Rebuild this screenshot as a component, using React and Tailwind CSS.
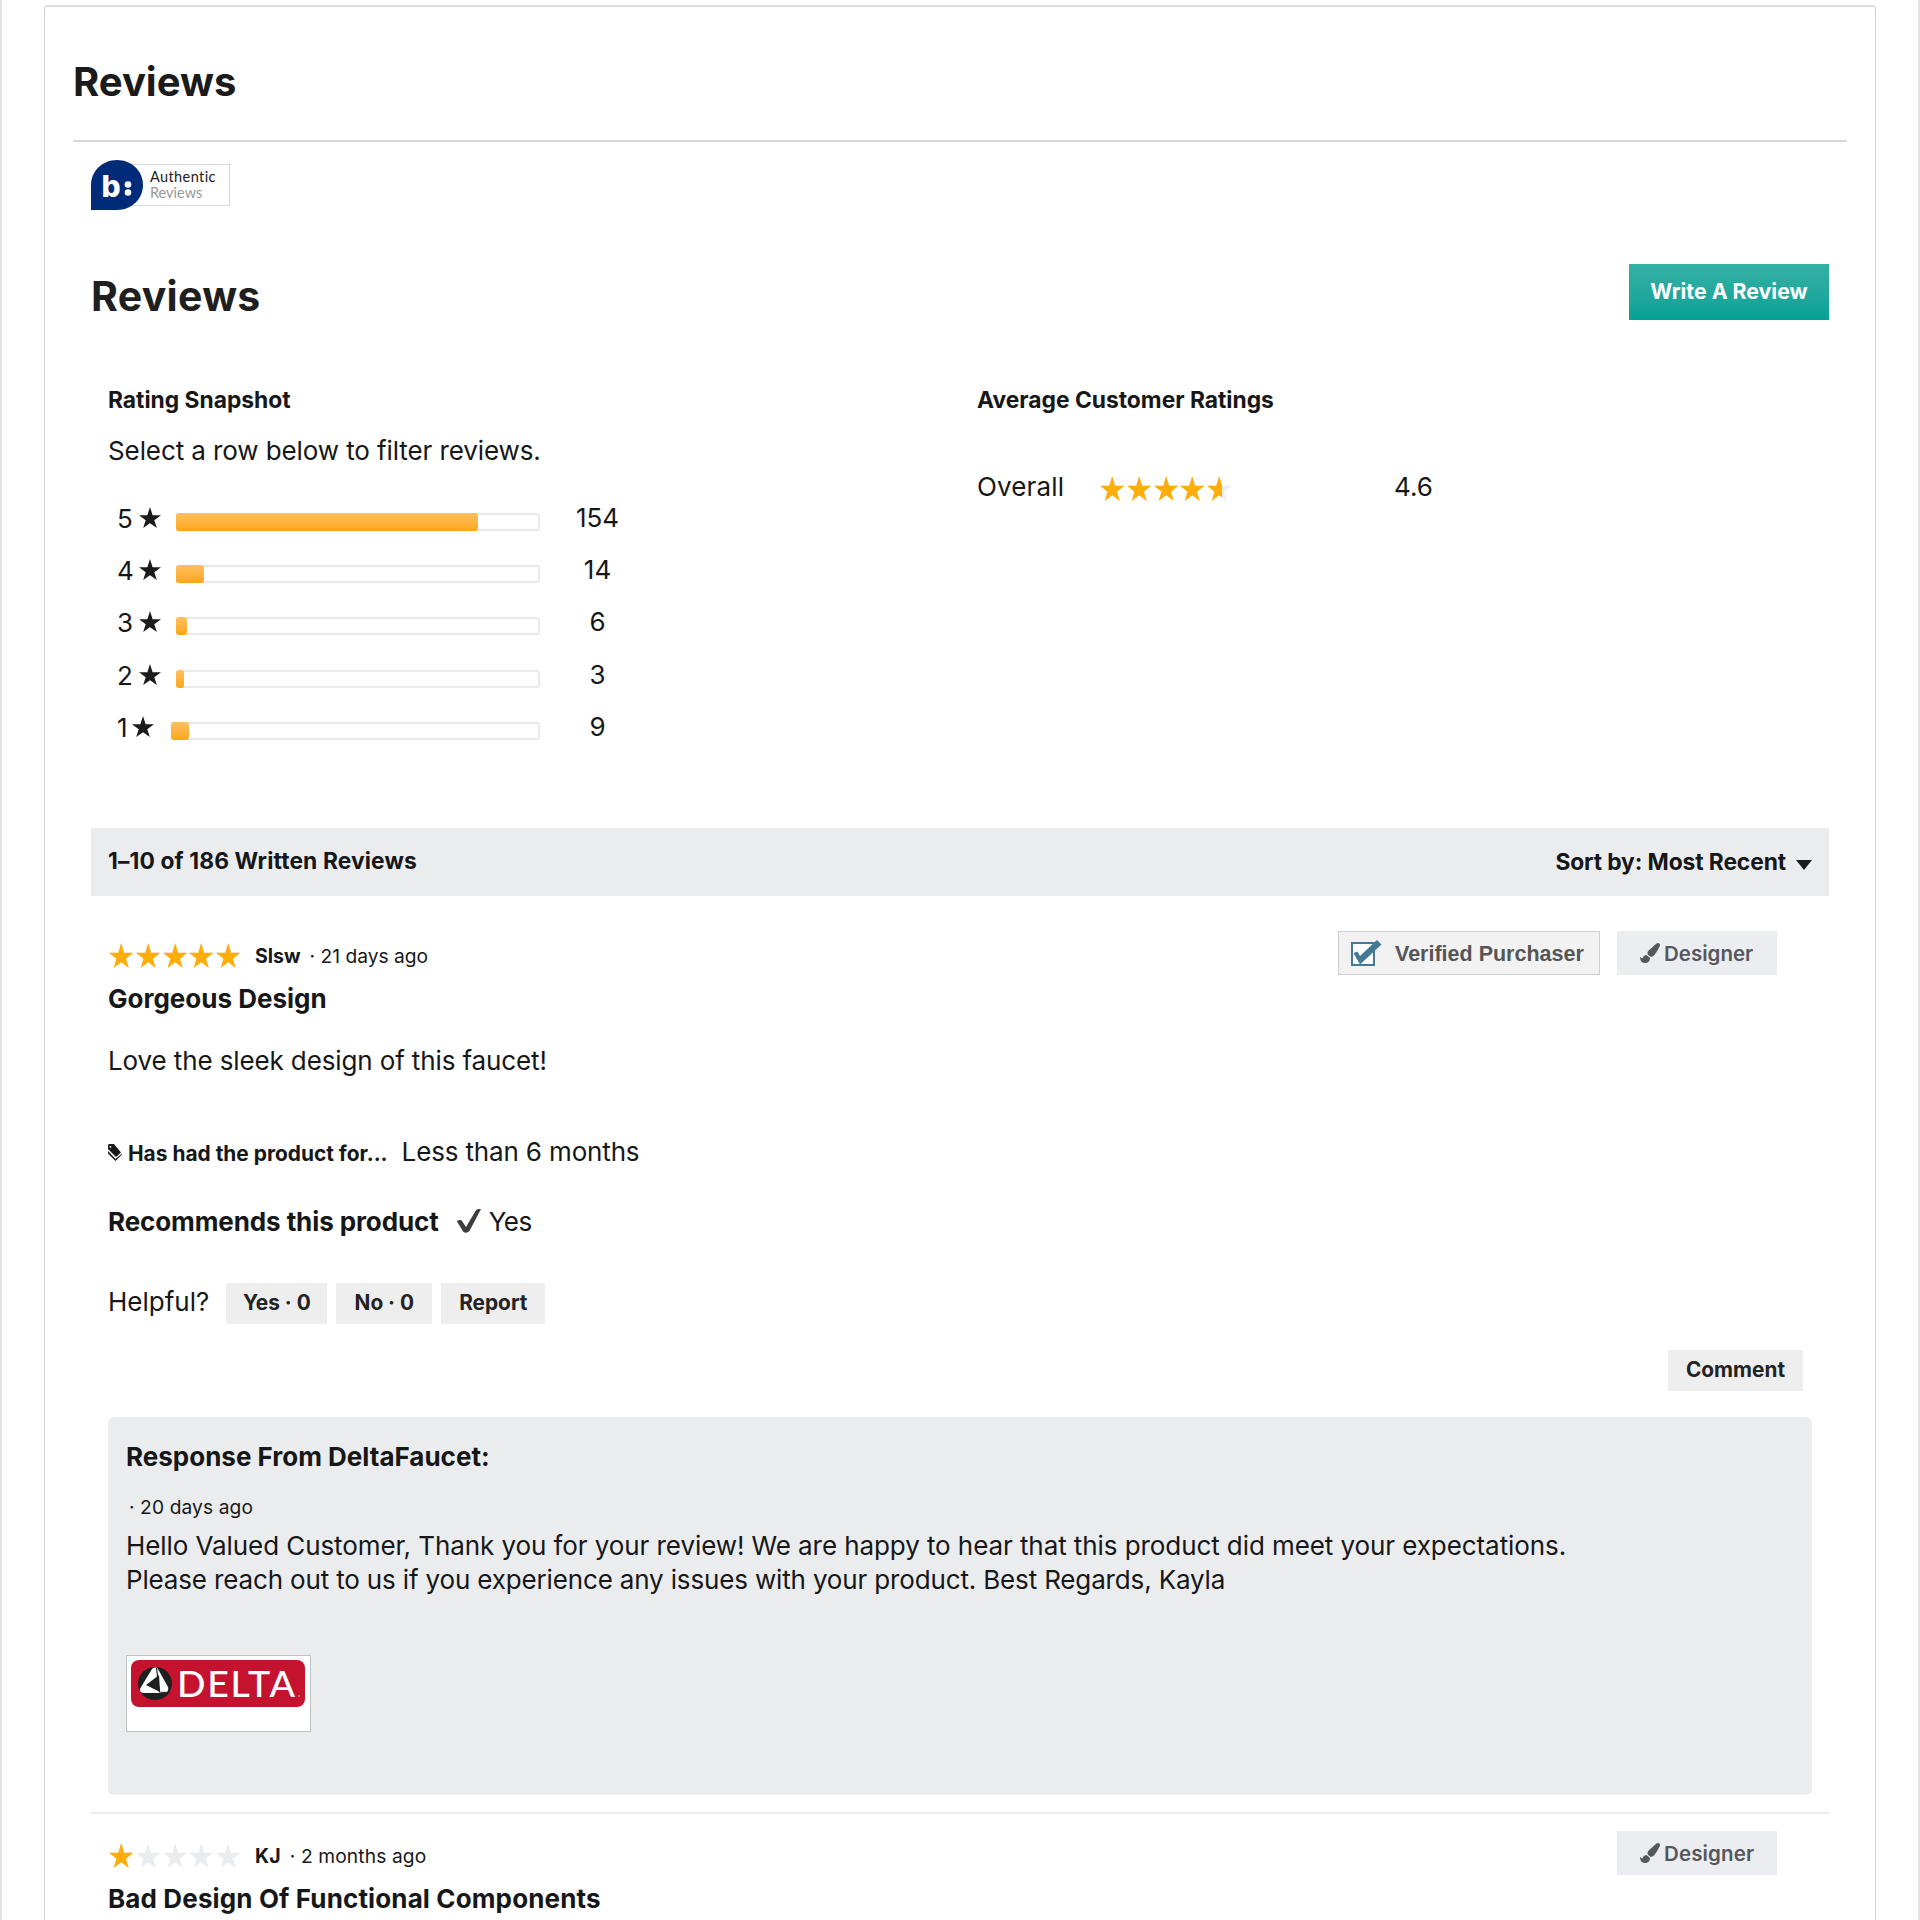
import React from 'react';
import clsx from 'clsx';
import { FaPaintBrush } from 'react-icons/fa';

const SNAPSHOT = [
  { stars: 5, count: 154, fill: 302 },
  { stars: 4, count: 14, fill: 28 },
  { stars: 3, count: 6, fill: 10.5 },
  { stars: 2, count: 3, fill: 7.5 },
  { stars: 1, count: 9, fill: 18 },
];

const STAR_POINTS = '50,0 62,38 100,38 69.5,61 81,97 50,75 19,97 30.5,61 0,38 38,38';

function Star({ className }) {
  return (
    <svg viewBox="0 0 100 97" preserveAspectRatio="none" className={clsx('shrink-0', className)}>
      <polygon points={STAR_POINTS} fill="currentColor" />
    </svg>
  );
}

function StarRow({ className }) {
  return (
    <div className={clsx('flex w-[134px] gap-[2.4px]', className)}>
      {[1, 2, 3, 4, 5].map((n) => (
        <Star key={n} className="h-[25px] w-[24.4px]" />
      ))}
    </div>
  );
}

// Grey stars with an orange copy clipped to the rating
function Rating({ width }) {
  return (
    <div className="relative ml-px h-[25px] w-[134px] shrink-0">
      <StarRow className="text-[#eaecee]" />
      <div className="absolute top-0 left-0 overflow-hidden text-[#ffad08]" style={{ width }}>
        <StarRow />
      </div>
    </div>
  );
}

function AuthenticBadge() {
  return (
    <div className="mt-[18px] flex h-[50px] w-[139px] items-center">
      <svg viewBox="0 0 52 50" className="z-10 h-[50px] w-[52px] shrink-0">
        <path d="M0 50V25C0 11 11.5 0 26 0s26 11 26 25-11.500 25-26 25z" fill="#002b78" />
        <text x="10.500" y="37" fill="#fff" fontFamily="Inter, sans-serif" fontWeight="800" fontSize="30">b</text>
        <circle cx="37" cy="24.500" r="3.300" fill="#fff" />
        <circle cx="37" cy="32.500" r="3.300" fill="#fff" />
      </svg>
      <div className="-ml-5 flex h-[42px] grow flex-col justify-center border border-[#d3d9de] pl-[26px] font-[Lato,sans-serif] text-[14.5px] leading-4">
        <span className="tracking-[0.4px] text-[#222]">Authentic</span>
        <span className="text-[#999]">Reviews</span>
      </div>
    </div>
  );
}

function SnapshotRow({ stars, count, fill }) {
  return (
    <div className="flex h-[52.4px] items-center pl-[9px]">
      <span className={clsx('text-[26px]', stars === 1 ? 'w-[15px]' : 'w-[22px]')}>{stars}</span>
      <Star className="mb-[2px] h-[21px] w-[22px] text-[#1b1b1b]" />
      <div className={clsx('mt-[7px] h-[18px] grow rounded-[3px] border-2 border-[#e9e9e9]', stars === 1 ? 'ml-[17px]' : 'ml-[15px]')}>
        <div
          className="-mt-[2px] -ml-[2px] h-[18px] rounded-[3px] bg-linear-to-b from-[#fdc05c] to-[#ffa60a]"
          style={{ width: fill }}
        />
      </div>
      <span className="mb-[2px] w-[115px] text-center text-[26px]">{count}</span>
    </div>
  );
}

function VerifiedBadge() {
  return (
    <div className="flex h-[44px] w-[262px] items-center border border-[#cfcfcf] bg-[#f2f2f2] pl-3">
      <svg viewBox="0 0 31 27" className="h-[27px] w-[31px] shrink-0">
        <rect x="1" y="3" width="22" height="22" fill="#fff" stroke="#427995" strokeWidth="2" />
        <path d="M2.500 13l4-1.500L9 16 26 0l4.500 4.500L9 24.500z" fill="#427995" />
      </svg>
      <span className="ml-[13px] pt-[3px] font-['Liberation_Sans',sans-serif] text-[21.5px] font-bold whitespace-nowrap text-[#565656]">Verified Purchaser</span>
    </div>
  );
}

function DesignerBadge() {
  return (
    <div className="flex h-[44px] w-[160px] items-center bg-[#ebedf0] pl-[23px] text-[#55575b]">
      <FaPaintBrush className="size-5" />
      <span className="ml-[4px] pt-[2px] text-[20.5px] font-semibold">Designer</span>
    </div>
  );
}

function GreyButton({ className, children }) {
  return (
    <button className={clsx('h-[41px] bg-[#eeeeee] pb-[2px] text-[20.8px] font-bold text-[#232323]', className)}>{children}</button>
  );
}

function ReviewHeader({ author, date, width, title, verified }) {
  return (
    <>
      <div className="flex h-[44px] justify-between">
        <div className="flex items-center pt-[5px]">
          <Rating width={width} />
          <span className="ml-3 pt-[2px] text-[19.5px] font-bold">{author}</span>
          <span className="ml-[9px] pt-px text-[19.2px]">· {date}</span>
        </div>
        <div className="mr-[35px] flex gap-[17px]">
          {verified && <VerifiedBadge />}
          <DesignerBadge />
        </div>
      </div>
      <h3 className="mt-[6px] text-[26px] leading-9 font-bold">{title}</h3>
    </>
  );
}

function DeltaLogo() {
  return (
    <div className="mt-[58px] h-[77px] w-[185px] border border-[#bfc2c5] bg-white p-1">
      <svg viewBox="0 0 174 47" className="h-[47px] w-[174px]">
        <rect width="174" height="47" rx="8" fill="#c4122f" />
        <ellipse cx="24" cy="23.500" rx="17" ry="16.500" fill="#1f1f1f" />
        <path d="M21 9c2-2 5-2 6 0l10 18c1 3-1 6-4 6H13c-4 0-5-3-3-6z" fill="#fff" />
        <path d="M28 15l1 17L15 25z" fill="#1f1f1f" />
        <path d="M25.500 8l3 24 10 1" fill="none" stroke="#1f1f1f" strokeWidth="1.200" />
        <text x="46" y="37" fill="#fff" fontFamily="Lato, sans-serif" fontSize="37.500" fontWeight="500" textLength="118">DELTA</text>
        <circle cx="168" cy="36" r="1" fill="#df7c8c" />
      </svg>
    </div>
  );
}

function FirstReview() {
  return (
    <article className="px-[17px] pt-[35px]">
      <ReviewHeader author="Slsw" date="21 days ago" width={134} title="Gorgeous Design" verified />
      <p className="mt-[26px] text-[26px] leading-9 tracking-[-0.12px]">Love the sleek design of this faucet!</p>

      <div className="mt-[55px] flex h-9 items-center leading-9">
        <svg viewBox="0 0 14 17" className="h-[17px] w-[14px]">
          <path d="M1 0h5l7 8.500-5 4.500L0 5V1z" fill="#1b1b1b" />
          <path d="M0 7v2.500L7.500 17 14 10.500V9.500l-6.500 5.500z" fill="#1b1b1b" />
          <circle cx="2.500" cy="2.800" r="0.900" fill="#fff" />
        </svg>
        <span className="ml-[6px] pt-[3px] text-[20.9px] font-bold">Has had the product for...</span>
        <span className="ml-[14px] text-[26px] tracking-[-0.15px]">Less than 6 months</span>
      </div>

      <div className="mt-[34px] flex items-center text-[26px] leading-9">
        <span className="font-bold tracking-[-0.1px]">Recommends this product</span>
        <svg viewBox="0 0 24 24" className="mr-2 mb-[3px] ml-[18px] size-6">
          <path d="M0 12.500C1 10.500 4 10.500 5 12L9 18 18.500 2C19.500 0 22 0 24 0L13 21C11 24.500 7 24.500 5.500 21.500z" fill="#3d3d3d" />
        </svg>
        <span className="tracking-[-0.5px]">Yes</span>
      </div>

      <div className="mt-[43px] flex h-[41px] items-center">
        <span className="mb-[5px] text-[26px]">Helpful?</span>
        <GreyButton className="ml-[17px] w-[101px]">Yes · 0</GreyButton>
        <GreyButton className="ml-[9px] w-[96px]">No · 0</GreyButton>
        <GreyButton className="ml-[9px] w-[104px]">Report</GreyButton>
      </div>

      <div className="mt-[26px] mr-[9px] flex justify-end">
        <GreyButton className="w-[135px]">Comment</GreyButton>
      </div>

      <div className="mt-[26px] h-[378px] rounded-[6px] bg-[#ebecee] px-[18px] pt-[22px]">
        <h4 className="text-[26px] leading-9 font-bold">Response From DeltaFaucet:</h4>
        <p className="mt-[20px] ml-[3px] text-[19.2px] leading-6 tracking-[0.1px]">· 20 days ago</p>
        <p className="mt-[10px] text-[26px] leading-[34px] whitespace-nowrap">
          <span className="block tracking-[-0.08px]">Hello Valued Customer, Thank you for your review! We are happy to hear that this product did meet your expectations.</span>
          <span className="block tracking-[-0.155px]">Please reach out to us if you experience any issues with your product. Best Regards, Kayla</span>
        </p>
        <DeltaLogo />
      </div>
    </article>
  );
}

export default function App() {
  return (
    <div className="flex h-[1920px] w-full overflow-hidden border-x-2 border-[#e2e2e2] bg-white px-[42px] pt-[5px] font-[Inter,sans-serif] text-[#161719]">
      <div className="h-[1940px] w-full rounded-t-[4px] border border-t-2 border-[#d3d3d3] border-t-[#dcdcdc] px-[28px]">
        <h1 className="pt-[52px] text-[40px] leading-[46px] font-bold text-[#1b1b1b]">Reviews</h1>
        <hr className="mt-[35px] border-t-2 border-[#d8d8d8]" />

        <div className="px-[18px]">
          <AuthenticBadge />

          <div className="mt-[54px] flex h-[56px] items-center justify-between">
            <h2 className="pt-[7px] text-[41px] leading-[46px] font-bold tracking-[0.3px] text-[#1f1f1f]">Reviews</h2>
            <button className="h-[56px] w-[200px] bg-linear-to-b from-[#35b0a5] to-[#03a196] text-[21.3px] font-bold text-white">Write A Review</button>
          </div>

          <section className="flex h-[508px] px-[17px] pt-[65px]">
            <div className="w-[869px]">
              <h3 className="text-[22.8px] leading-[30px] font-bold">Rating Snapshot</h3>
              <p className="mt-[18px] mb-[23px] text-[26px] leading-9 tracking-[-0.1px]">Select a row below to filter reviews.</p>
              <div className="w-[547px]">
                {SNAPSHOT.map((row) => (
                  <SnapshotRow key={row.stars} {...row} />
                ))}
              </div>
            </div>
            <div>
              <h3 className="text-[22.8px] leading-[30px] font-bold">Average Customer Ratings</h3>
              <div className="mt-[53px] flex h-9 items-center text-[26px]">
                <span className="w-[122px] tracking-[0.15px]">Overall</span>
                <div className="mt-[5px]">
                  <Rating width={122} />
                </div>
                <span className="ml-[160px]">4.6</span>
              </div>
            </div>
          </section>

          <div className="flex h-[68px] items-center justify-between bg-[#ebecee] px-[17px] pb-[2px] text-[22.8px] font-bold">
            <span className="tracking-[0.12px]">1–10 of 186 Written Reviews</span>
            <button className="flex items-center pt-[2px]">
              <span className="tracking-[-0.1px]">Sort by: Most Recent</span>
              <svg viewBox="0 0 16 10" className="mt-[6px] ml-[10px] h-[10px] w-4">
                <path d="M0 0h16L8 10z" fill="#1b1b1b" />
              </svg>
            </button>
          </div>

          <FirstReview />

          <hr className="mt-[17px] border-t-2 border-[#ebedee]" />

          <article className="px-[17px] pt-[17px] tracking-[0.13px]">
            <ReviewHeader author="KJ" date="2 months ago" width={25} title="Bad Design Of Functional Components" />
          </article>
        </div>
      </div>
    </div>
  );
}
